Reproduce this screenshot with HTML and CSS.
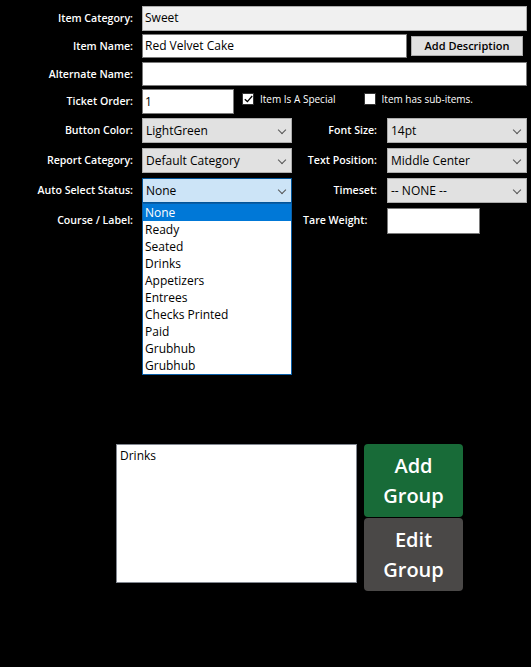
FILE: index.html
```html
<!DOCTYPE html>
<html>
<head>
<meta charset="utf-8">
<link rel="stylesheet" href="styles.css">
</head>
<body>
<div class="page">
  <div class="form">
    <div class="row">
      <div class="label">Item Category:</div>
      <div class="field readonly wide h25">Sweet</div>
    </div>
    <div class="row">
      <div class="label">Item Name:</div>
      <div class="field name h24">Red Velvet Cake</div>
      <div class="btn-desc">Add Description</div>
    </div>
    <div class="row">
      <div class="label">Alternate Name:</div>
      <div class="field wide h24"></div>
    </div>
    <div class="row">
      <div class="label">Ticket Order:</div>
      <div class="field ticket h25">1</div>
      <div class="check checked">
        <svg width="9" height="8" viewBox="0 0 9 8"><path d="M0.8 4.2 L3.4 6.6 L8.2 1" fill="none" stroke="#000" stroke-width="1.3"/></svg>
      </div>
      <div class="check-text">Item Is A Special</div>
      <div class="check second"></div>
      <div class="check-text">Item has sub-items.</div>
    </div>
    <div class="row">
      <div class="label">Button Color:</div>
      <div class="select left-sel">LightGreen<span class="chev"></span></div>
      <div class="rlabel">Font Size:</div>
      <div class="select right-sel">14pt<span class="chev"></span></div>
    </div>
    <div class="row">
      <div class="label">Report Category:</div>
      <div class="select left-sel">Default Category<span class="chev"></span></div>
      <div class="rlabel">Text Position:</div>
      <div class="select right-sel">Middle Center<span class="chev"></span></div>
    </div>
    <div class="row">
      <div class="label">Auto Select Status:</div>
      <div class="select left-sel focused">None<span class="chev"></span>
        <ul class="dropdown">
          <li class="sel">None</li>
          <li>Ready</li>
          <li>Seated</li>
          <li>Drinks</li>
          <li>Appetizers</li>
          <li>Entrees</li>
          <li>Checks Printed</li>
          <li>Paid</li>
          <li>Grubhub</li>
          <li>Grubhub</li>
        </ul>
      </div>
      <div class="rlabel">Timeset:</div>
      <div class="select right-sel">-- NONE --<span class="chev"></span></div>
    </div>
    <div class="row">
      <div class="label">Course / Label:</div>
      <div class="spacer"></div>
      <div class="tlabel">Tare Weight:</div>
      <div class="field tare"></div>
    </div>
  </div>

  <div class="groups">
    <div class="listbox">
      <div class="item">Drinks</div>
    </div>
    <div class="gbtns">
      <div class="gbtn add">Add<br>Group</div>
      <div class="gbtn edit">Edit<br>Group</div>
    </div>
  </div>
</div>
</body>
</html>
```

FILE: styles.css
```css
html, body {
  margin: 0;
  padding: 0;
  background: #000;
}
body {
  width: 531px;
  height: 667px;
  overflow: hidden;
  font-family: "Open Sans", "Noto Sans", sans-serif;
  color: #000;
}
.page {
  padding-top: 6px;
}
.form {
  display: grid;
  grid-template-rows: 28px 28px 27px 29px 30px 30px 30px 30px;
}
.row {
  display: flex;
  align-items: flex-start;
  position: relative;
}
.label {
  width: 142px;
  flex: none;
  text-align: right;
  color: #fff;
  font-weight: 600;
  font-size: 10.6px;
  line-height: 25px;
  padding-right: 9px;
  box-sizing: border-box;
  white-space: nowrap;
}
.field {
  box-sizing: border-box;
  background: #fff;
  border: 1px solid #7a7a7a;
  font-size: 12px;
  line-height: 22px;
  padding-left: 2px;
  white-space: nowrap;
}
.h25 { height: 25px; }
.h24 { height: 24px; }
.readonly { background: #f0f0f0; border-color: #adadad; }
.wide { width: 385px; }
.name { width: 265px; }
.btn-desc {
  margin-left: 4px;
  margin-top: 2px;
  width: 112px;
  height: 20px;
  box-sizing: border-box;
  background: #e1e1e1;
  border: 1px solid #adadad;
  font-size: 11px;
  font-weight: 600;
  text-align: center;
  line-height: 18px;
}
.ticket { width: 92px; line-height: 23px; }
.check {
  width: 12px;
  height: 12px;
  box-sizing: border-box;
  background: #fff;
  border: 1px solid #333;
  margin-top: 4px;
  display: flex;
  align-items: center;
  justify-content: center;
}
.check.checked {
  margin-left: 8px;
  background: #fff;
}
.check.second { margin-left: 28px; }
.check-text {
  color: #fff;
  font-size: 10px;
  line-height: 20px;
  margin-left: 6px;
  white-space: nowrap;
}
.select {
  position: relative;
  box-sizing: border-box;
  height: 25px;
  background: #e1e1e1;
  border: 1px solid #adadad;
  font-size: 12px;
  line-height: 23px;
  padding-left: 3px;
  white-space: nowrap;
}
.left-sel { width: 150px; }
.right-sel { width: 140px; }
.select.focused {
  background: #cce4f7;
  border-color: #005499;
}
.chev {
  position: absolute;
  right: 6px;
  top: 8px;
  width: 5px;
  height: 5px;
  border-right: 1px solid #555;
  border-bottom: 1px solid #555;
  transform: rotate(45deg);
}
.rlabel {
  width: 85px;
  flex: none;
  text-align: right;
  color: #fff;
  font-weight: 600;
  font-size: 10.6px;
  line-height: 25px;
  box-sizing: border-box;
  padding-right: 0;
  margin-right: 10px;
  white-space: nowrap;
}
.spacer { width: 150px; flex: none; }
.tlabel {
  margin-left: 11px;
  width: 84px;
  flex: none;
  color: #fff;
  font-weight: 600;
  font-size: 10.6px;
  line-height: 25px;
  white-space: nowrap;
}
.tare { width: 93px; height: 26px; }
.dropdown {
  position: absolute;
  left: -1px;
  top: 24px;
  width: 150px;
  margin: 0;
  padding: 0;
  list-style: none;
  background: #fff;
  border: 1px solid #0a5fa8;
  box-sizing: border-box;
  z-index: 5;
}
.dropdown li {
  height: 17px;
  line-height: 17px;
  font-size: 12px;
  padding-left: 2px;
  color: #000;
}
.dropdown li.sel {
  background: #0078d7;
  color: #fff;
}
.groups {
  display: flex;
  margin-top: 206px;
  margin-left: 116px;
  align-items: flex-start;
}
.listbox {
  width: 241px;
  height: 139px;
  box-sizing: border-box;
  background: #fff;
  border: 1px solid #828790;
  padding: 2px 3px;
}
.listbox .item {
  font-size: 12px;
  line-height: 17px;
}
.gbtns {
  margin-left: 7px;
  display: flex;
  flex-direction: column;
  gap: 1px;
}
.gbtn {
  width: 99px;
  height: 73px;
  box-sizing: border-box;
  border-radius: 4px;
  color: #fff;
  font-size: 20px;
  font-weight: 600;
  line-height: 30px;
  text-align: center;
  display: flex;
  align-items: center;
  justify-content: center;
}
.gbtn.add { background: #186b38; }
.gbtn.edit { background: #4a4847; }
```
